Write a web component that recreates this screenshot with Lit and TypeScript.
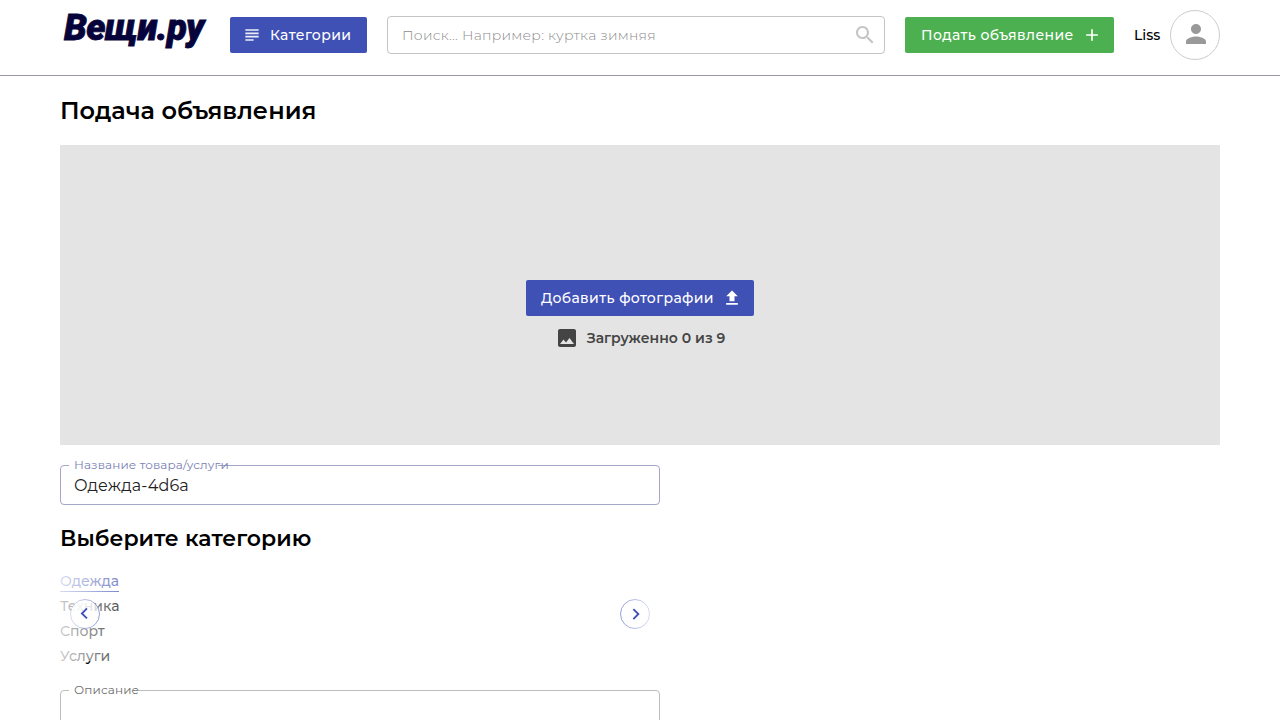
import { LitElement, html, css, svg } from "lit";

const icon = (d: string, size: number, cls = "") =>
  html`<svg class=${cls} width=${size} height=${size} viewBox="0 0 24 24" fill="currentColor">${svg`<path d=${d}></path>`}</svg>`;

const ICONS = {
  subject: "M14 17H4v2h10v-2zm6-8H4v2h16V9zM4 15h16v-2H4v2zM4 5v2h16V5H4z",
  search: "M15.5 14h-.79l-.28-.27C15.41 12.59 16 11.11 16 9.5 16 5.91 13.09 3 9.5 3S3 5.91 3 9.5 5.91 16 9.5 16c1.61 0 3.09-.59 4.23-1.57l.27.28v.79l5 4.99L20.49 19l-4.99-5zm-6 0C7.01 14 5 11.99 5 9.5S7.01 5 9.5 5 14 7.01 14 9.5 11.99 14 9.5 14z",
  add: "M19 13h-6v6h-2v-6H5v-2h6V5h2v6h6v2z",
  person: "M12 12c2.21 0 4-1.79 4-4s-1.79-4-4-4-4 1.79-4 4 1.79 4 4 4zm0 2c-2.67 0-8 1.34-8 4v2h16v-2c0-2.66-5.33-4-8-4z",
  publish: "M5 20h14v-2H5v2zm0-10h4v6h6v-6h4l-7-7-7 7z",
  image: "M21 19V5c0-1.1-.9-2-2-2H5c-1.1 0-2 .9-2 2v14c0 1.1.9 2 2 2h14c1.1 0 2-.9 2-2zM8.5 13.5l2.5 3.01L14.500 12l4.500 6H5l3.500-4.500z",
  left: "M15.41 7.41L14 6l-6 6 6 6 1.41-1.41L10.83 12z",
  right: "M10 6L8.590 7.410 13.170 12l-4.580 4.590L10 18l6-6z",
};

class AppRoot extends LitElement {
  static styles = css`
    :host { display: block; height: 720px; overflow: hidden; background: #fff; color: #000; font-family: Montserrat, sans-serif; }
    * { box-sizing: border-box; }
    svg { display: block; flex: none; }
    header { height: 76px; border-bottom: 1px solid #9a98a8; padding: 10px 60px 0; display: flex; align-items: flex-start; }
    .bar { flex: 1; height: 50px; display: flex; align-items: center; }
    .logo { width: 150px; height: 50px; margin-right: 20px; padding-left: 4px; font: italic 900 36.5px/36px Roboto, sans-serif; color: #06043a; white-space: nowrap; letter-spacing: -0.6px; -webkit-text-stroke: .8px #06043a; }
    .btn { display: flex; align-items: center; height: 36px; border-radius: 2px; border: 0; margin: 0; color: #fff; font: 500 14px/24px Montserrat, sans-serif; letter-spacing: .4px; white-space: nowrap; background: #3f51b5; }
    .cat { width: 137px; padding-left: 12px; }
    .cat svg { margin-right: 8px; opacity: .9; }
    .search { flex: 1; height: 38px; margin: 0 20px; border: 1px solid #c4c4c4; border-radius: 4px; display: flex; align-items: center; justify-content: space-between; padding: 0 7px 0 14px; font-weight: 300; font-size: 14px; letter-spacing: .25px; color: #8c8c8c; }
    .search svg { color: #c4c4c4; }
    .post { width: 209px; background: #4caf50; padding-left: 16px; }
    .post svg { margin-left: 8px; }
    .user { margin-left: 20px; font-weight: 500; font-size: 14px; width: 36px; }
    .avatar { width: 50px; height: 50px; border: 1px solid #ccc; border-radius: 50%; padding: 8px 0 0 10px; color: #999; }
    main { padding: 20px 60px 0; }
    h1, h2 { margin: 0; font-weight: 600; }
    h1 { font-size: 24px; line-height: 29px; }
    h2 { font-size: 22px; line-height: 27px; margin-top: 20px; }
    .photos { margin-top: 20px; height: 300px; background: #e4e4e4; display: flex; flex-direction: column; align-items: center; padding-top: 135px; }
    .upload { width: 228px; padding-left: 15px; }
    .upload svg { margin-left: 8px; }
    .count { display: flex; align-items: center; margin-top: 10px; color: #444; font: 600 14px/24px Montserrat, sans-serif; letter-spacing: .01px; gap: 8px; }
    .field { position: relative; width: 600px; height: 40px; margin-top: 20px; padding: 11px 14px; color: #222; font-size: 16px; line-height: 19px; letter-spacing: .15px; }
    .field fieldset { position: absolute; inset: -5px 0 0; margin: 0; padding: 0 8px; border: 1px solid #a3a6c4; border-radius: 4px; }
    .field legend { height: 11px; padding: 0; }
    .field .long { width: 149px; }
    .field .short { width: 64px; }
    .field label { position: absolute; left: 14px; top: -8px; font-size: 12px; line-height: 16px; letter-spacing: .13px; color: #7a80b3; white-space: nowrap; }
    .about { margin-top: 20px; height: 120px; }
    .about fieldset { border-color: #bdbdbd; }
    .about label { color: #6d6d6d; }
    .slider { position: relative; width: 600px; height: 100px; margin-top: 18px; font-size: 14px; font-weight: 500; }
    .item { height: 25px; display: flex; align-items: flex-start; }
    .item span { line-height: 23px; height: 22px; }
    .item .on { color: #3f51b5; border-bottom: 1px solid #3f51b5; }
    .fade { position: absolute; top: 0; left: 0; width: 100px; height: 91px; background: linear-gradient(to right, rgba(255,255,255,.8), rgba(255,255,255,0)); }
    .arrow { position: absolute; top: 29px; }
    .prev { left: 10px; }
    .next { left: 560px; }
  `;

  arrow(side: "left" | "right") {
    const left = side === "left";
    return html`<svg class="arrow ${left ? "prev" : "next"}" width="30" height="30" viewBox="0 0 30 30">
      ${svg`<defs>
        <linearGradient id=${side + "-fill"}><stop offset="0" stop-color="#fff" stop-opacity=".95"></stop><stop offset="1" stop-color="#fff" stop-opacity=".65"></stop></linearGradient>
        <linearGradient id=${side + "-ring"}><stop offset="0" stop-color="#3f51b5" stop-opacity=${left ? 0.2 : 0.55}></stop><stop offset="1" stop-color="#3f51b5" stop-opacity=${left ? 0.55 : 0.2}></stop></linearGradient>
      </defs>
      <circle cx="15" cy="15" r="14.500" fill=${`url(#${side}-fill)`} stroke=${`url(#${side}-ring)`}></circle>
      <g transform=${left ? "translate(3 3) scale(.95)" : "translate(4.500 3.700) scale(.95)"}><path fill="#3f51b5" d=${ICONS[side]}></path></g>`}
    </svg>`;
  }

  render() {
    return html`
      <header><div class="bar">
        <div class="logo">Вещи.ру</div>
        <button class="btn cat">${icon(ICONS.subject, 20)}Категории</button>
        <div class="search"><span>Поиск... Например: куртка зимняя</span>${icon(ICONS.search, 24)}</div>
        <button class="btn post">Подать объявление${icon(ICONS.add, 20)}</button>
        <span class="user">Liss</span>
        <div class="avatar">${icon(ICONS.person, 30)}</div>
      </div></header>
      <main>
        <h1>Подача объявления</h1>
        <section class="photos">
          <button class="btn upload">Добавить фотографии${icon(ICONS.publish, 20)}</button>
          <div class="count">${icon(ICONS.image, 24)}Загруженно 0 из 9</div>
        </section>
        <div class="field"><fieldset><legend class="long"></legend></fieldset><label>Название товара/услуги</label>Одежда-4d6a</div>
        <h2>Выберите категорию</h2>
        <div class="slider">
          ${["Одежда", "Техника", "Спорт", "Услуги"].map((t, i) => html`<div class="item"><span class=${i ? "" : "on"}>${t}</span></div>`)}
          <div class="fade"></div>
          ${this.arrow("left")}${this.arrow("right")}
        </div>
        <div class="field about"><fieldset><legend class="short"></legend></fieldset><label>Описание</label></div>
      </main>`;
  }
}
customElements.define("app-root", AppRoot);
